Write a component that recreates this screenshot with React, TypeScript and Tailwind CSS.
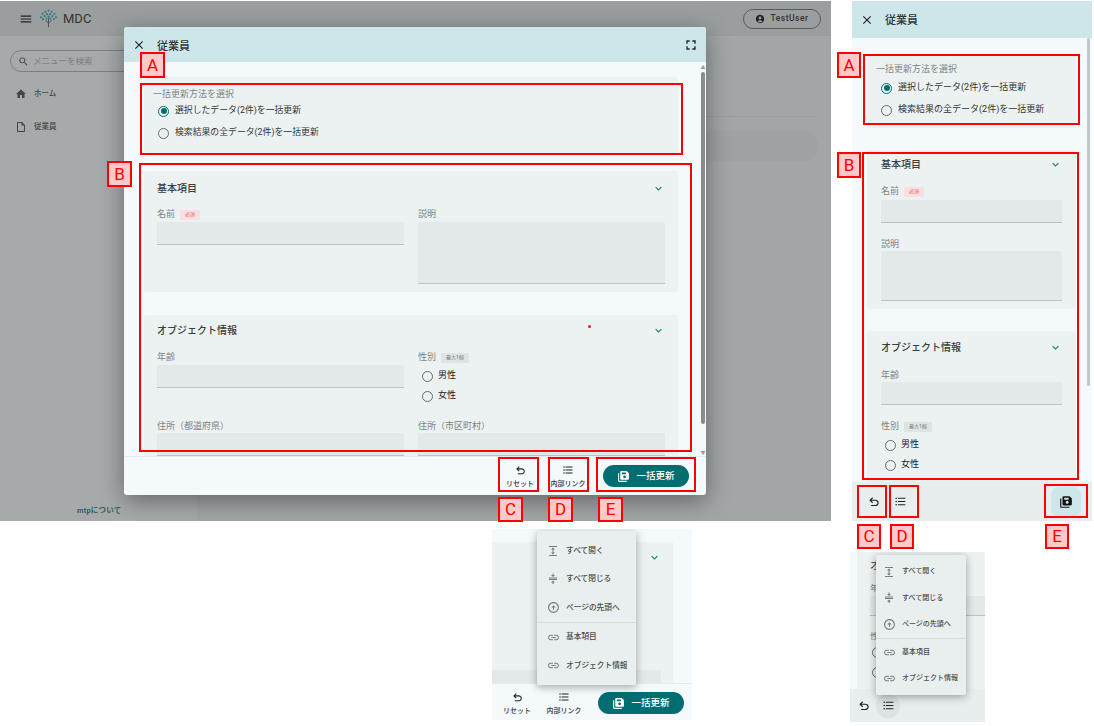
import React from "react";
import {
  MdClose, MdMenu, MdHome, MdOutlineInsertDriveFile, MdSearch, MdAccountCircle, MdFullscreen,
  MdKeyboardArrowDown, MdFormatListBulleted, MdExpand, MdCompress, MdOutlineArrowCircleUp, MdLink,
} from "react-icons/md";

function SaveIcon({ size, color }: { size: number; color: string }) {
  return (
    <svg width={size} height={size} viewBox="0 0 24 24" fill={color}>
      <path d="M4 6H2v14c0 1.1.9 2 2 2h14v-2H4V6z" />
      <path fillRule="evenodd" d="M18 2H8c-1.1 0-2 .9-2 2v12c0 1.1.9 2 2 2h12c1.1 0 2-.9 2-2V6l-4-4zM9 4.5h7.5V8H9V4.5zM14 10a2.6 2.6 0 1 1 0 5.2 2.6 2.6 0 0 1 0-5.2z" />
    </svg>
  );
}

function UndoIcon({ size }: { size: number }) {
  return (
    <svg width={size} height={size} viewBox="0 0 24 24" fill="#222">
      <path d="M7 19v-2h7.1q1.575 0 2.738-1T18 13.5q0-1.5-1.163-2.5T14.1 10H7.8l2.6 2.6L9 14 4 9l5-5 1.4 1.4L7.8 8h6.3q2.425 0 4.163 1.575T20 13.5q0 2.35-1.738 3.925T14.1 19H7z" />
    </svg>
  );
}

function Logo() {
  const dots: [number, number][] = [
    [12, 2], [8, 3.5], [16, 3.5], [4.5, 6], [19.5, 6], [10, 6.5], [14, 6.5], [7, 9], [17, 9],
    [2.5, 10.5], [21.5, 10.5], [12, 9.5], [5, 13], [19, 13], [9.5, 12], [14.5, 12],
  ];
  return (
    <svg width="19" height="19" viewBox="0 0 24 24">
      {dots.map(([x, y], i) => <circle key={i} cx={x} cy={y} r="1.35" fill="#2c7f83" />)}
      <path d="M12 11v12M12 18l-4-4M12 18l4-4" stroke="#4b5050" strokeWidth="1.2" fill="none" />
    </svg>
  );
}

function Radio({ checked }: { checked?: boolean }) {
  return checked ? (
    <span className="flex h-[11px] w-[11px] shrink-0 items-center justify-center rounded-full border border-[#006d70]">
      <span className="h-[6px] w-[6px] rounded-full bg-[#006d70]" />
    </span>
  ) : (
    <span className="h-[11px] w-[11px] shrink-0 rounded-full border border-[#666a6a]" />
  );
}

function RadioRow({ label, checked, cls }: { label: string; checked?: boolean; cls: string }) {
  return (
    <div className={"flex h-[20px] items-center " + cls}>
      <Radio checked={checked} />
      <span>{label}</span>
    </div>
  );
}

function Label({ text, chip, red }: { text: string; chip?: string; red?: boolean }) {
  return (
    <div className="flex h-[12px] items-center gap-[5px] text-[9px] text-[#808484]">
      <span>{text}</span>
      {chip && (
        <span className={red ? "flex h-[10px] items-center rounded-[1px] bg-[#f9dfdf] px-[5px] text-[5px] text-[#e86a6a]" : "flex h-[10px] items-center rounded-[1px] bg-[#dee3e3] px-[5px] text-[5px] text-[#777]"}>
          {chip}
        </span>
      )}
    </div>
  );
}

function Field({ tall }: { tall?: boolean }) {
  return <div className={tall ? "h-[62px] rounded-t-[2px] border-b border-[#bcc1c1] bg-[#e3e8e8]" : "h-[23px] rounded-t-[2px] border-b border-[#bcc1c1] bg-[#e3e8e8]"} />;
}

function CardTitle({ text }: { text: string }) {
  return (
    <div className="flex h-[18px] items-center justify-between">
      <span className="text-[10px] font-medium text-[#3a3d3d]">{text}</span>
      <MdKeyboardArrowDown size={13} color="#11797c" />
    </div>
  );
}

function MethodCard({ wide }: { wide?: boolean }) {
  const rowCls = wide ? "gap-[6px] text-[8.85px] text-[#333]" : "gap-[6px] text-[9px] text-[#333]";
  return (
    <div className={wide ? "h-[76px] rounded-[4px] bg-[#ecf1f1] pl-[9px] pt-[11px]" : "h-[73px] rounded-[4px] bg-[#ecf1f1] pl-[9px] pt-[8px]"}>
      <div className="text-[9px] leading-[12px] text-[#808484]">一括更新方法を選択</div>
      <div className={wide ? "flex flex-col gap-[2px] pl-[5px] pt-[1px]" : "flex flex-col gap-[2px] pl-[5px] pt-[3px]"}>
        <RadioRow cls={rowCls} checked label="選択したデータ(2件)を一括更新" />
        <RadioRow cls={rowCls} label="検索結果の全データ(2件)を一括更新" />
      </div>
    </div>
  );
}

function TextButton({ icon, label }: { icon: React.ReactNode; label: string }) {
  return (
    <div className="flex w-[40px] flex-col items-center">
      <span className="flex h-[14px] items-center">{icon}</span>
      <span className="whitespace-nowrap pt-[2px] text-[7px] font-medium leading-[10px] text-[#333]">{label}</span>
    </div>
  );
}

function FooterActions({ gapCls }: { gapCls: string }) {
  return (
    <div className={"flex items-center " + gapCls}>
      <TextButton icon={<UndoIcon size={13} />} label="リセット" />
      <TextButton icon={<MdFormatListBulleted size={12} color="#222" />} label="内部リンク" />
      <div className="ml-[7px] flex h-[22px] w-[86px] items-center justify-center gap-[6px] rounded-full bg-[#006d70] text-[9.5px] font-medium text-white">
        <SaveIcon size={13} color="#fff" />
        <span>一括更新</span>
      </div>
    </div>
  );
}

function Tag({ children, box, cls }: { children?: React.ReactNode; box?: boolean; cls: string }) {
  return box ? (
    <div className={"absolute border-2 border-[#ff0000] " + cls} />
  ) : (
    <div className={"absolute flex items-center justify-center border-2 border-[#ff0000] bg-[#ffc9c9] text-[17px] leading-none text-[#ff0000] " + cls}>
      {children}
    </div>
  );
}

function MenuItem({ icon, label, cls, iconCls }: { icon: React.ReactNode; label: string; cls: string; iconCls: string }) {
  return (
    <div className={"flex items-center font-medium text-[#4a4d4d] " + cls}>
      <span className={"flex justify-center " + iconCls}>{icon}</span>
      <span>{label}</span>
    </div>
  );
}

function LinkMenu({ cls, itemCls, iconCls }: { cls: string; itemCls: string; iconCls: string }) {
  const c = "#777b7b";
  return (
    <div className={"absolute flex flex-col justify-center rounded-[2px] bg-[#e9eeee] shadow-[0_2px_8px_rgba(0,0,0,0.35)] " + cls}>
      <MenuItem cls={itemCls} iconCls={iconCls} icon={<MdExpand size={12} color={c} />} label="すべて開く" />
      <MenuItem cls={itemCls} iconCls={iconCls} icon={<MdCompress size={12} color={c} />} label="すべて閉じる" />
      <MenuItem cls={itemCls} iconCls={iconCls} icon={<MdOutlineArrowCircleUp size={13} color={c} />} label="ページの先頭へ" />
      <div className="h-px bg-[#d5dada]" />
      <MenuItem cls={itemCls} iconCls={iconCls} icon={<MdLink size={13} color={c} />} label="基本項目" />
      <MenuItem cls={itemCls} iconCls={iconCls} icon={<MdLink size={13} color={c} />} label="オブジェクト情報" />
    </div>
  );
}

function Scrollbar() {
  return (
    <div className="flex w-[6px] shrink-0 flex-col items-center bg-[#f4f9fc]">
      <span className="pt-[3px] text-[5px] leading-[5px] text-[#999]">▲</span>
      <div className="mt-[2px] h-[352px] w-[4px] rounded-full bg-[#8a8c8c]" />
      <div className="flex-1" />
      <span className="pb-[1px] text-[5px] leading-[5px] text-[#999]">▼</span>
    </div>
  );
}

const genderRow = "gap-[5px] text-[9px] text-[#222]";

function Dialog() {
  return (
    <div className="absolute left-[124px] top-[26px] flex h-[468px] w-[582px] flex-col overflow-hidden rounded-[3px] bg-[#f4f9fc] shadow-[0_6px_24px_rgba(0,0,0,0.4)]">
      <div className="flex h-[35px] shrink-0 items-center bg-[#cde6e9] pl-[8px] pr-[7px]">
        <MdClose size={14} color="#222" />
        <span className="pl-[11px] pt-[6px] text-[11px] font-medium text-[#333]">従業員</span>
        <MdFullscreen size={16} color="#222" className="ml-auto" />
      </div>
      <div className="flex min-h-0 flex-1">
        <div className="min-w-0 flex-1 overflow-hidden pl-[20px] pr-[22px] pt-[15px]">
          <MethodCard wide />
          <div className="mt-[18px] h-[121px] rounded-[2px] bg-[#ecf1f1] px-[13px] pt-[8px]">
            <CardTitle text="基本項目" />
            <div className="grid grid-cols-2 gap-x-[14px] pt-[12px]">
              <div><Label text="名前" chip="必須" red /><div className="pt-[1px]"><Field /></div></div>
              <div><Label text="説明" /><div className="pt-[1px]"><Field tall /></div></div>
            </div>
          </div>
          <div className="relative mt-[23px] h-[170px] rounded-[2px] bg-[#ecf1f1] px-[13px] pt-[6px]">
            <span className="absolute left-[444px] top-[10px] h-[3px] w-[3px] rounded-full bg-[#e01f2a]" />
            <CardTitle text="オブジェクト情報" />
            <div className="grid grid-cols-2 gap-x-[14px] pt-[13px]">
              <div><Label text="年齢" /><div className="pt-[1px]"><Field /></div></div>
              <div>
                <Label text="性別" chip="最大1個" />
                <div className="pl-[4px] pt-[2px]">
                  <RadioRow cls={genderRow} label="男性" />
                  <RadioRow cls={genderRow} label="女性" />
                </div>
              </div>
              <div className="pt-[15px]"><Label text="住所（都道府県）" /><Field /></div>
              <div className="pt-[15px]"><Label text="住所（市区町村）" /><Field /></div>
            </div>
          </div>
        </div>
        <Scrollbar />
      </div>
      <div className="flex h-[39px] shrink-0 items-center justify-end border-t border-[#e6ebeb] pr-[17px]">
        <FooterActions gapCls="gap-[8px]" />
      </div>
    </div>
  );
}

function MainPane() {
  return (
    <div className="absolute left-0 top-[1px] flex h-[520px] w-[831px] flex-col overflow-hidden bg-[#a6aaaa]">
      <div className="flex h-[35px] shrink-0 items-center bg-[#9a9e9e] pl-[19px] pr-[10px]">
        <MdMenu size={14} color="#222" />
        <span className="pl-[6px]"><Logo /></span>
        <span className="pl-[5px] text-[13px] text-[#333]">MDC</span>
        <div className="ml-auto flex h-[20px] w-[78px] items-center justify-center gap-[5px] rounded-full border border-[#555a5a] text-[8.5px] font-medium tracking-[0.5px] text-[#333]">
          <MdAccountCircle size={10} color="#222" />
          <span>TestUser</span>
        </div>
      </div>
      <div className="flex min-h-0 flex-1">
        <div className="flex w-[197px] shrink-0 flex-col bg-[#a6aaaa] pl-[10px]">
          <div className="mt-[14px] flex h-[22px] w-[180px] items-center gap-[4px] rounded-full border border-[#7c8080] pl-[7px] text-[8.5px] text-[#7b7f7f]">
            <MdSearch size={11} color="#444" />
            <span>メニューを検索</span>
          </div>
          <div className="mt-[12px] flex h-[20px] items-center gap-[7px] pl-[5px] text-[7.5px] font-medium text-[#444]">
            <MdHome size={12} color="#444" />
            <span>ホーム</span>
          </div>
          <div className="mt-[13px] flex h-[20px] items-center gap-[7px] pl-[5px] text-[7.5px] font-medium text-[#444]">
            <MdOutlineInsertDriveFile size={12} color="#444" />
            <span>従業員</span>
          </div>
          <div className="mt-auto pb-[5px] pl-[67px] text-[7.5px] font-bold tracking-[0.2px] text-[#3c5c62]">mtpについて</div>
        </div>
        <div className="min-w-0 flex-1 bg-[#a2a6a6] pr-[13px] pt-[80px]">
          <div className="h-px bg-[#9a9e9e]" />
          <div className="mt-[14px] h-[30px] rounded-r-[15px] bg-[#9ea2a2]" />
        </div>
      </div>
      <Dialog />
    </div>
  );
}

function PhonePane() {
  return (
    <div className="absolute left-[852px] top-[1px] flex h-[520px] w-[240px] flex-col overflow-hidden bg-[#f4f9fc]">
      <div className="flex h-[37px] shrink-0 items-center bg-[#cde6e9] pl-[8px]">
        <MdClose size={14} color="#222" />
        <span className="pl-[11px] pt-[4px] text-[11px] font-medium text-[#333]">従業員</span>
      </div>
      <div className="flex min-h-0 flex-1">
        <div className="min-w-0 flex-1 overflow-hidden pl-[15px] pr-[11px] pt-[17px]">
          <MethodCard />
          <div className="mt-[22px] h-[159px] rounded-[4px] bg-[#ecf1f1] px-[14px] pt-[5px]">
            <CardTitle text="基本項目" />
            <div className="pt-[13px]"><Label text="名前" chip="必須" red /></div>
            <div className="pt-[2px]"><Field /></div>
            <div className="pt-[16px]"><Label text="説明" /></div>
            <div className="h-[50px] rounded-t-[2px] border-b border-[#bcc1c1] bg-[#e3e8e8]" />
          </div>
          <div className="mt-[22px] h-[170px] rounded-[4px] bg-[#ecf1f1] px-[14px] pt-[7px]">
            <CardTitle text="オブジェクト情報" />
            <div className="pt-[14px]"><Label text="年齢" /></div>
            <Field />
            <div className="pt-[16px]"><Label text="性別" chip="最大1個" /></div>
            <div className="pl-[4px] pt-[2px]">
              <RadioRow cls={genderRow} label="男性" />
              <RadioRow cls={genderRow} label="女性" />
            </div>
          </div>
        </div>
        <div className="w-[5px] shrink-0">
          <div className="h-[348px] w-[3px] rounded-full bg-[#c4c7c7]" />
        </div>
      </div>
      <div className="flex h-[39px] shrink-0 items-center bg-[#e8eeee] pl-[15px] pr-[11px]">
        <UndoIcon size={14} />
        <span className="pl-[13px]"><MdFormatListBulleted size={13} color="#222" /></span>
        <div className="ml-auto flex h-[30px] w-[30px] items-center justify-center rounded-[8px] bg-[#cde6e9]">
          <SaveIcon size={14} color="#111" />
        </div>
      </div>
    </div>
  );
}

function WideMenuPane() {
  return (
    <div className="absolute left-[492px] top-[529px] flex h-[191px] w-[200px] flex-col overflow-hidden bg-[#f4f9fc]">
      <div className="min-h-0 flex-1 overflow-hidden pt-[13px] pr-[19px]">
        <div className="flex h-[150px] flex-col justify-end bg-[#ecf1f1] pr-[12px]">
          <div className="h-[22px] bg-[#e3e8e8]" />
        </div>
      </div>
      <div className="flex h-[37px] shrink-0 items-center justify-end border-t border-[#e6ebeb] pr-[8px] pt-[2px]">
        <FooterActions gapCls="gap-[7px]" />
      </div>
      <MdKeyboardArrowDown size={13} color="#11797c" className="absolute left-[156px] top-[22px]" />
      <LinkMenu cls="left-[45px] top-[2px] h-[154px] w-[99px]" itemCls="h-[28.5px] text-[7.7px]" iconCls="w-[29px] pl-[4px] pr-[1px]" />
    </div>
  );
}

function PhoneMenuPane() {
  return (
    <div className="absolute left-[850px] top-[552px] flex h-[170px] w-[135px] flex-col overflow-hidden bg-[#f4f9fc]">
      <div className="min-h-0 flex-1 overflow-hidden pl-[7px]">
        <div className="h-full bg-[#ecf1f1] pl-[13px] pt-[7px] text-[10px] text-[#3a3d3d]">
          <div className="leading-[14px]">オ</div>
          <div className="pt-[9px] text-[8.5px] leading-[12px] text-[#808484]">年</div>
          <div className="mt-[2px] h-[20px] border-b border-[#bcc1c1] bg-[#e3e8e8]" />
          <div className="pt-[14px] text-[8.5px] leading-[12px] text-[#808484]">性</div>
          <div className="flex flex-col gap-[9px] pl-[2px] pt-[5px]"><Radio /><Radio /></div>
        </div>
      </div>
      <div className="flex h-[33px] shrink-0 items-center bg-[#e8eeee] pl-[7px]">
        <UndoIcon size={14} />
        <span className="ml-[5px] flex h-[24px] w-[24px] items-center justify-center rounded-full bg-[#dde3e3]">
          <MdFormatListBulleted size={13} color="#222" />
        </span>
      </div>
      <LinkMenu cls="left-[26px] top-[3px] h-[140px] w-[90px]" itemCls="h-[26.5px] text-[7px]" iconCls="w-[26px]" />
    </div>
  );
}

export default function App() {
  return (
    <div className="relative h-[726px] w-[1094px] overflow-hidden bg-white font-[Roboto,'Noto_Sans_CJK_JP',sans-serif]">
      <MainPane />
      <PhonePane />
      <WideMenuPane />
      <PhoneMenuPane />

      <Tag box cls="left-[140px] top-[83px] h-[72px] w-[543px]" />
      <Tag box cls="left-[139px] top-[163px] h-[289px] w-[553px]" />
      <Tag box cls="left-[498px] top-[457px] h-[35px] w-[41px]" />
      <Tag box cls="left-[548px] top-[457px] h-[35px] w-[41px]" />
      <Tag box cls="left-[596px] top-[457px] h-[35px] w-[100px]" />
      <Tag cls="left-[140px] top-[52px] h-[26px] w-[25px]">A</Tag>
      <Tag cls="left-[107px] top-[161px] h-[26px] w-[25px]">B</Tag>
      <Tag cls="left-[498px] top-[497px] h-[25px] w-[25px]">C</Tag>
      <Tag cls="left-[548px] top-[497px] h-[25px] w-[25px]">D</Tag>
      <Tag cls="left-[598px] top-[497px] h-[25px] w-[25px]">E</Tag>

      <Tag box cls="left-[863px] top-[54px] h-[71px] w-[217px]" />
      <Tag box cls="left-[862px] top-[152px] h-[328px] w-[217px]" />
      <Tag box cls="left-[857px] top-[485px] h-[33px] w-[30px]" />
      <Tag box cls="left-[889px] top-[485px] h-[33px] w-[30px]" />
      <Tag box cls="left-[1044px] top-[484px] h-[34px] w-[44px]" />
      <Tag cls="left-[837px] top-[52px] h-[26px] w-[24px]">A</Tag>
      <Tag cls="left-[837px] top-[152px] h-[26px] w-[24px]">B</Tag>
      <Tag cls="left-[857px] top-[524px] h-[25px] w-[24px]">C</Tag>
      <Tag cls="left-[890px] top-[524px] h-[25px] w-[24px]">D</Tag>
      <Tag cls="left-[1045px] top-[524px] h-[25px] w-[24px]">E</Tag>
    </div>
  );
}
